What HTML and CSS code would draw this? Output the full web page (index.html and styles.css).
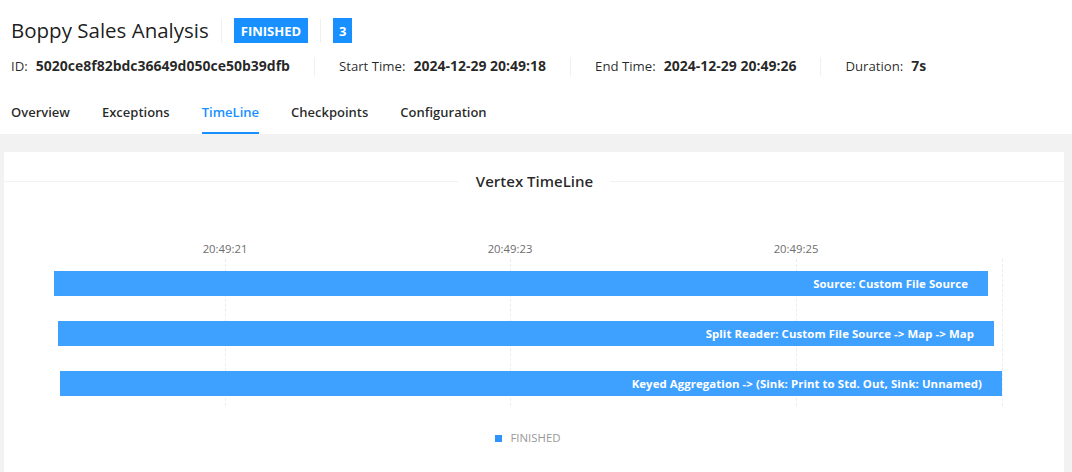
FILE: index.html
```html
<!DOCTYPE html>
<html lang="en">
<head>
<meta charset="utf-8">
<title>Boppy Sales Analysis</title>
<link rel="stylesheet" href="styles.css">
</head>
<body>
<div class="page">
  <header class="job-header">
    <div class="title-row">
      <h1 class="job-title">Boppy Sales Analysis</h1>
      <span class="vdivider"></span>
      <span class="tag">FINISHED</span>
      <span class="vdivider"></span>
      <span class="tag tag-num">3</span>
    </div>
    <div class="meta-row">
      <span class="meta"><span class="meta-label">ID:</span><b class="meta-value">5020ce8f82bdc36649d050ce50b39dfb</b></span>
      <span class="vdivider meta-divider"></span>
      <span class="meta"><span class="meta-label">Start Time:</span><b class="meta-value">2024-12-29 20:49:18</b></span>
      <span class="vdivider meta-divider"></span>
      <span class="meta"><span class="meta-label">End Time:</span><b class="meta-value">2024-12-29 20:49:26</b></span>
      <span class="vdivider meta-divider"></span>
      <span class="meta"><span class="meta-label">Duration:</span><b class="meta-value">7s</b></span>
    </div>
    <nav class="tabs">
      <a class="tab">Overview</a>
      <a class="tab">Exceptions</a>
      <a class="tab tab-active">TimeLine</a>
      <a class="tab">Checkpoints</a>
      <a class="tab">Configuration</a>
    </nav>
  </header>
  <main class="content">
    <section class="card">
      <div class="card-title">
        <span class="title-line"></span>
        <span class="title-text">Vertex TimeLine</span>
        <span class="title-line"></span>
      </div>
      <div class="chart">
        <div class="axis">
          <span class="axis-label" style="left:221px">20:49:21</span>
          <span class="axis-label" style="left:506px">20:49:23</span>
          <span class="axis-label" style="left:792px">20:49:25</span>
        </div>
        <div class="plot">
          <span class="gridline" style="left:221px"></span>
          <span class="gridline" style="left:506px"></span>
          <span class="gridline" style="left:792px"></span>
          <span class="gridline" style="left:998px"></span>
          <div class="bar" style="margin-left:50px;width:934px">Source: Custom File Source</div>
          <div class="bar" style="margin-left:54px;width:936px">Split Reader: Custom File Source -&gt; Map -&gt; Map</div>
          <div class="bar" style="margin-left:56px;width:942px">Keyed Aggregation -&gt; (Sink: Print to Std. Out, Sink: Unnamed)</div>
        </div>
        <div class="legend">
          <span class="legend-swatch"></span>
          <span class="legend-text">FINISHED</span>
        </div>
      </div>
    </section>
  </main>
</div>
</body>
</html>
```

FILE: styles.css
```css
* {
  box-sizing: border-box;
}

html, body {
  margin: 0;
  padding: 0;
}

body {
  font-family: "Open Sans", "Noto Sans", "Liberation Sans", sans-serif;
  color: rgba(0, 0, 0, 0.85);
  background: #f2f2f2;
  font-size: 14px;
}

.page {
  width: 1072px;
  min-height: 472px;
  overflow: hidden;
}

.job-header {
  background: #ffffff;
  padding: 18px 0 0 11px;
}

.title-row {
  display: flex;
  align-items: center;
  height: 25px;
}

.job-title {
  margin: 0;
  font-size: 20.5px;
  font-weight: 400;
  line-height: 25px;
  color: rgba(0, 0, 0, 0.9);
}

.vdivider {
  display: block;
  width: 1px;
  height: 24px;
  background: #f0f0f0;
  margin: 0 12px;
}

.tag {
  display: flex;
  align-items: center;
  justify-content: center;
  height: 25px;
  padding: 0 7px;
  background: #1890ff;
  color: #ffffff;
  font-size: 13px;
  font-weight: 700;
}

.tag-num {
  width: 19px;
  padding: 0;
}

.meta-row {
  display: flex;
  align-items: center;
  height: 20px;
  margin-top: 13px;
}

.meta {
  display: flex;
  align-items: center;
  gap: 8px;
  white-space: nowrap;
  font-size: 14px;
  line-height: 20px;
}

.meta-label {
  font-size: 13.2px;
}

.meta-value {
  font-weight: 700;
  font-size: 14px;
}

.meta-divider {
  height: 19px;
  margin: 0 24px;
}

.tabs {
  display: flex;
  gap: 32px;
  margin-top: 12px;
}

.tab {
  display: block;
  padding: 13px 0 9px;
  line-height: 22px;
  font-size: 13px;
  font-weight: 600;
  color: rgba(0, 0, 0, 0.85);
  border-bottom: 2px solid transparent;
}

.tab-active {
  color: #1890ff;
  border-bottom-color: #1890ff;
}

.content {
  padding: 18px 8px 0 4px;
}

.card {
  background: #ffffff;
  padding-bottom: 40px;
}

.card-title {
  display: flex;
  align-items: center;
  padding-top: 18px;
}

.title-line {
  flex: 1;
  height: 1px;
  background: #f2f2f2;
}

.title-text {
  padding: 0 17px 0 18px;
  font-size: 15px;
  font-weight: 600;
  line-height: 22px;
  color: rgba(0, 0, 0, 0.85);
}

.chart {
  position: relative;
}

.axis {
  position: relative;
  height: 18px;
  margin-top: 48px;
}

.axis-label {
  position: absolute;
  top: 0;
  transform: translateX(-50%);
  font-size: 11.3px;
  line-height: 18px;
  color: #6e6e6e;
  white-space: nowrap;
}

.plot {
  position: relative;
  display: flex;
  flex-direction: column;
  gap: 25px;
  height: 147px;
  margin-top: 1px;
  padding-top: 12px;
}

.gridline {
  position: absolute;
  top: 0;
  bottom: 0;
  width: 0;
  border-left: 1px dashed #ececec;
}

.bar {
  position: relative;
  height: 25px;
  padding-right: 20px;
  background: #3fa1ff;
  color: #ffffff;
  font-size: 11.4px;
  font-weight: 700;
  letter-spacing: 0.08px;
  line-height: 25px;
  text-align: right;
  white-space: nowrap;
}

.legend {
  display: flex;
  align-items: center;
  justify-content: center;
  gap: 8px;
  height: 16px;
  margin-top: 24px;
  padding-right: 12px;
}

.legend-swatch {
  display: block;
  width: 7px;
  height: 7px;
  background: #2f95fb;
}

.legend-text {
  font-size: 11.4px;
  line-height: 16px;
  color: #999999;
}
```
